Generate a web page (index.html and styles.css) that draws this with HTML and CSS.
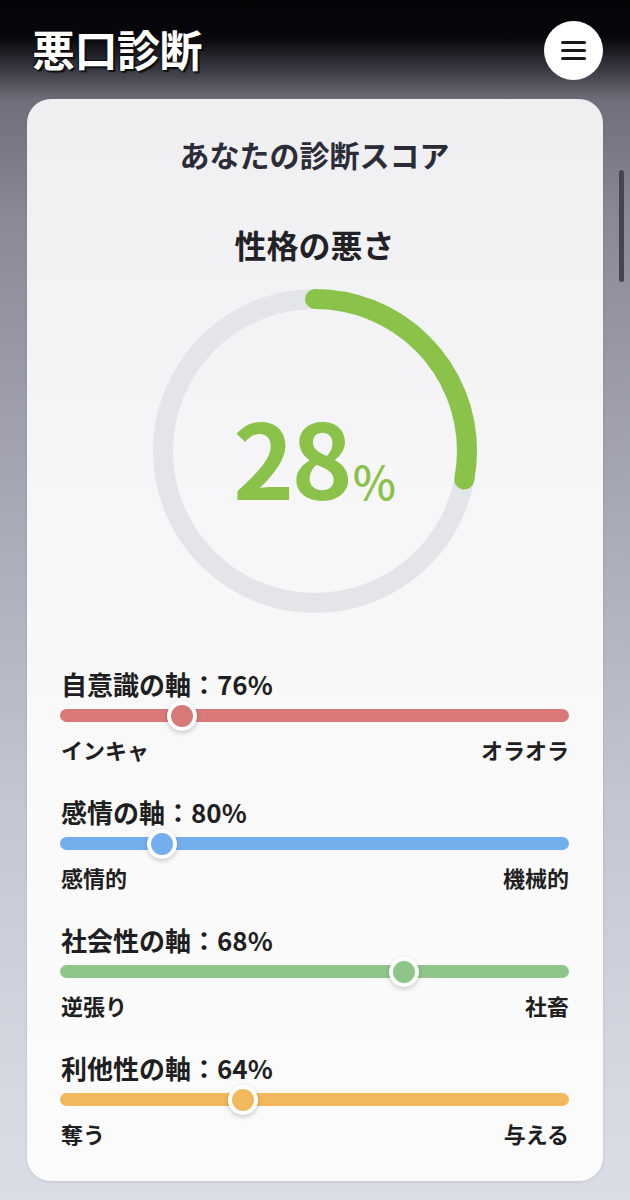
FILE: index.html
```html
<!DOCTYPE html>
<html lang="ja">
<head>
<meta charset="utf-8">
<title>悪口診断</title>
<link rel="stylesheet" href="styles.css">
</head>
<body>
<header class="topbar">
  <h1 class="brand">悪口診断</h1>
  <button class="menu-btn" aria-label="メニュー">
    <span class="bar"></span><span class="bar"></span><span class="bar"></span>
  </button>
</header>

<main class="card">
  <h2 class="card-title">あなたの診断スコア</h2>
  <h3 class="score-title">性格の悪さ</h3>

  <div class="donut">
    <svg class="donut-svg" viewBox="0 0 324 324" width="324" height="324">
      <circle class="ring-track" cx="162" cy="162" r="152"></circle>
      <circle class="ring-value" cx="162" cy="162" r="152" stroke-dasharray="267.4 955" transform="rotate(-90 162 162)"></circle>
    </svg>
    <div class="donut-label"><span class="num">28</span><span class="pct">%</span></div>
  </div>

  <section class="axes">
    <div class="axis axis-red">
      <div class="axis-label">自意識の軸：76%</div>
      <div class="track"><span class="thumb" style="left:24%"></span></div>
      <div class="ends"><span>インキャ</span><span>オラオラ</span></div>
    </div>
    <div class="axis axis-blue">
      <div class="axis-label">感情の軸：80%</div>
      <div class="track"><span class="thumb" style="left:20%"></span></div>
      <div class="ends"><span>感情的</span><span>機械的</span></div>
    </div>
    <div class="axis axis-green">
      <div class="axis-label">社会性の軸：68%</div>
      <div class="track"><span class="thumb" style="left:67.6%"></span></div>
      <div class="ends"><span>逆張り</span><span>社畜</span></div>
    </div>
    <div class="axis axis-orange">
      <div class="axis-label">利他性の軸：64%</div>
      <div class="track"><span class="thumb" style="left:36%"></span></div>
      <div class="ends"><span>奪う</span><span>与える</span></div>
    </div>
  </section>
</main>

<div class="scrollbar"></div>
</body>
</html>
```

FILE: styles.css
```css
* { box-sizing: border-box; }

html, body {
  margin: 0;
  padding: 0;
}

body {
  width: 630px;
  height: 1200px;
  overflow: hidden;
  font-family: "Noto Sans CJK JP", "Noto Sans", sans-serif;
  background: linear-gradient(to bottom,
    #050508 0px,
    #08080c 38px,
    #3a3a44 70px,
    #6f6f7b 100px,
    #8a8a97 220px,
    #a7a8b6 500px,
    #c3c5d1 800px,
    #d6d9e2 1100px,
    #dadde6 1200px);
}

.topbar {
  height: 99px;
  display: flex;
  align-items: center;
  justify-content: space-between;
  padding: 0 27px 0 32px;
}

.brand {
  margin: 0;
  font-size: 43px;
  line-height: 1;
  font-weight: 700;
  color: #ffffff;
  letter-spacing: -0.5px;
  text-shadow: 0 0 2px #000, 2px 2px 1px #111, -1px -1px 1px #111;
  margin-top: -2px;
}

.menu-btn {
  width: 59px;
  height: 59px;
  border-radius: 50%;
  border: none;
  background: #ffffff;
  display: flex;
  flex-direction: column;
  align-items: center;
  justify-content: center;
  gap: 5px;
  padding: 0;
  margin-top: 1px;
}

.menu-btn .bar {
  display: block;
  width: 25px;
  height: 3px;
  border-radius: 2px;
  background: #17171c;
}

.card {
  margin: 0 27px 0 27px;
  width: 576px;
  border-radius: 24px;
  background: linear-gradient(to bottom, #efeff2 0%, #f6f6f8 35%, #fafafa 70%, #fbfbfb 100%);
  padding: 35px 34px 33px 33px;
  display: flex;
  flex-direction: column;
  align-items: stretch;
  box-shadow: 0 1px 3px rgba(40, 40, 60, 0.12);
}

.card-title {
  margin: 0;
  text-align: center;
  font-size: 30px;
  line-height: 40px;
  font-weight: 700;
  color: #2c2c38;
}

.score-title {
  margin: 48px 0 0;
  text-align: center;
  font-size: 32px;
  line-height: 44px;
  font-weight: 700;
  color: #212126;
}

.donut {
  margin: 23px auto 0;
  width: 324px;
  height: 324px;
  display: grid;
  place-items: center;
}

.donut-svg {
  grid-area: 1 / 1;
  display: block;
}

.ring-track {
  fill: none;
  stroke: #e4e5e9;
  stroke-width: 20;
}

.ring-value {
  fill: none;
  stroke: #8bc34a;
  stroke-width: 20;
  stroke-linecap: round;
}

.donut-label {
  grid-area: 1 / 1;
  display: flex;
  align-items: baseline;
  color: #8bc34a;
  margin-top: 8px;
  margin-left: 0;
}

.donut-label .num {
  font-family: "Noto Sans CJK JP", "Noto Sans", sans-serif;
  font-size: 104px;
  line-height: 1;
  font-weight: 700;
  letter-spacing: -3px;
}

.donut-label .pct {
  font-family: "Noto Sans CJK JP", "Noto Sans", sans-serif;
  font-size: 46px;
  line-height: 1;
  font-weight: 500;
  margin-left: 3px;
}

.axes {
  margin-top: 54px;
  display: flex;
  flex-direction: column;
  gap: 31px;
}

.axis {
  display: flex;
  flex-direction: column;
}

.axis-label {
  font-size: 26px;
  line-height: 34px;
  font-weight: 700;
  color: #1f1f22;
  margin-left: 1px;
}

.track {
  position: relative;
  margin-top: 8px;
  height: 13px;
  border-radius: 7px;
}

.thumb {
  position: absolute;
  top: 50%;
  width: 30px;
  height: 30px;
  border-radius: 50%;
  border: 4px solid #ffffff;
  transform: translate(-50%, -50%);
  box-shadow: 0 2px 5px rgba(0, 0, 0, 0.2);
}

.ends {
  margin-top: 12px;
  display: flex;
  justify-content: space-between;
  font-size: 22px;
  line-height: 30px;
  font-weight: 700;
  color: #1f1f22;
  margin-left: 1px;
}

.axis-red .track, .axis-red .thumb { background: #d97977; }
.axis-blue .track, .axis-blue .thumb { background: #73afec; }
.axis-green .track, .axis-green .thumb { background: #8ec68a; }
.axis-orange .track, .axis-orange .thumb { background: #f1b85d; }

.scrollbar {
  position: fixed;
  top: 170px;
  left: 619px;
  width: 5px;
  height: 112px;
  border-radius: 3px;
  background: #45454f;
}
```
